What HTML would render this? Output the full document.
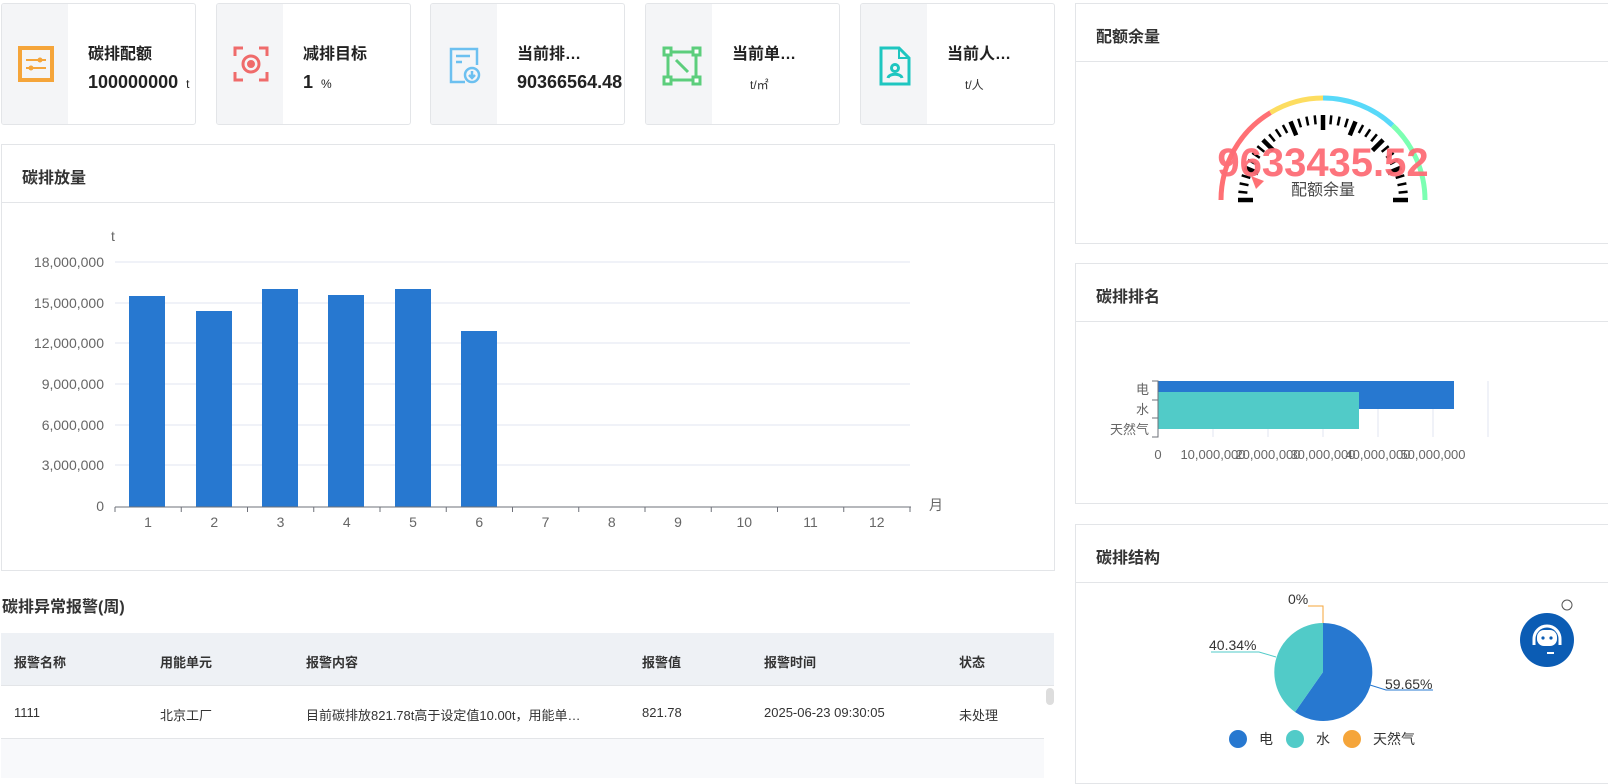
<!DOCTYPE html>
<html><head><meta charset="utf-8"><style>
*{box-sizing:border-box;margin:0;padding:0}
body{width:1608px;height:776px;overflow:hidden;background:#fff;font-family:"Liberation Sans","Noto Sans CJK SC",sans-serif;color:#333;position:relative}
.card{position:absolute;top:3px;height:122px;width:195px;border:1px solid #e3e5e8;border-radius:3px;background:#fff;overflow:hidden}
.card .ic{position:absolute;left:0;top:0;width:66px;height:100%;background:#f4f5f7}
.card .ic svg{position:absolute;left:16px;top:42px}
.card .t{position:absolute;left:86px;top:36px;font-size:16px;font-weight:bold;color:#222}
.card .v{position:absolute;left:86px;top:68px;font-size:18px;font-weight:bold;color:#222;white-space:nowrap}
.card .v small{font-size:12px;font-weight:normal;margin-left:8px}
.card .u{position:absolute;left:104px;top:72px;font-size:12px;color:#333}
.panel{position:absolute;border:1px solid #e3e5e8;background:#fff}
.panel .h{height:58px;border-bottom:1px solid #e3e5e8;font-size:16px;font-weight:bold;padding:19px 0 0 20px;color:#333}
.abs{position:absolute}
</style></head><body>

<div class="card" style="left:1px"><div class="ic"><svg width="36" height="36" viewBox="0 0 36 36"><rect x="2" y="2" width="32" height="32" fill="none" stroke="#f5a53a" stroke-width="4"/><path d="M8 14h20M8 22h20" stroke="#f5a53a" stroke-width="2"/><circle cx="22" cy="14" r="2.5" fill="#f5a53a"/><circle cx="13" cy="22" r="2.5" fill="#f5a53a"/></svg></div><div class="t">碳排配额</div><div class="v">100000000<small>t</small></div></div>
<div class="card" style="left:216px"><div class="ic"><svg width="36" height="36" viewBox="0 0 36 36" fill="none" stroke="#ef6b6b" stroke-width="3"><path d="M2 10V2h8M26 2h8v8M34 26v8h-8M10 34H2v-8"/><circle cx="18" cy="18" r="8"/><circle cx="18" cy="18" r="2.5" fill="#ef6b6b"/></svg></div><div class="t">减排目标</div><div class="v">1<small>%</small></div></div>
<div class="card" style="left:430px"><div class="ic"><svg width="36" height="40" viewBox="0 0 36 40" fill="none" stroke="#6cc0f0" stroke-width="2.5"><path d="M18 36H4V3h26v16"/><path d="M9 10h14M9 16h6"/><circle cx="25" cy="29" r="7"/><path d="M25 25v7M22 29l3 3 3-3"/></svg></div><div class="t">当前排…</div><div class="v">90366564.48</div></div>
<div class="card" style="left:645px"><div class="ic"><svg width="40" height="40" viewBox="0 0 40 40" fill="none" stroke="#5cce7c" stroke-width="3"><rect x="6" y="6" width="28" height="28"/><rect x="2" y="2" width="7" height="7" fill="#fff"/><rect x="31" y="2" width="7" height="7" fill="#fff"/><rect x="2" y="31" width="7" height="7" fill="#fff"/><rect x="31" y="31" width="7" height="7" fill="#fff"/><path d="M14 14l12 12"/></svg></div><div class="t">当前单…</div><div class="u">t/㎡</div></div>
<div class="card" style="left:860px"><div class="ic"><svg width="36" height="40" viewBox="0 0 36 40" fill="none" stroke="#1ec6c0" stroke-width="3"><path d="M4 2h18l10 10v26H4z"/><path d="M22 2v10h10" stroke-width="2"/><circle cx="18" cy="22" r="3.5"/><path d="M11 32c1-5 13-5 14 0"/></svg></div><div class="t">当前人…</div><div class="u">t/人</div></div>

<div class="panel" style="left:1px;top:144px;width:1054px;height:427px"><div class="h">碳排放量</div></div>
<svg class="abs" style="left:0;top:0" width="1060" height="560" font-family="Liberation Sans,sans-serif" font-size="14" fill="#666">
<text x="111" y="241">t</text>
<g stroke="#e0e6f1"><line x1="115" y1="262" x2="910" y2="262"/><line x1="115" y1="303" x2="910" y2="303"/><line x1="115" y1="343" x2="910" y2="343"/><line x1="115" y1="384" x2="910" y2="384"/><line x1="115" y1="425" x2="910" y2="425"/><line x1="115" y1="465" x2="910" y2="465"/></g>
<g text-anchor="end"><text x="104" y="267">18,000,000</text><text x="104" y="308">15,000,000</text><text x="104" y="348">12,000,000</text><text x="104" y="389">9,000,000</text><text x="104" y="430">6,000,000</text><text x="104" y="470">3,000,000</text><text x="104" y="511">0</text></g>
<g fill="#2778d0"><rect x="129" y="296" width="36" height="211"/><rect x="196" y="311" width="36" height="196"/><rect x="262" y="289" width="36" height="218"/><rect x="328" y="295" width="36" height="212"/><rect x="395" y="289" width="36" height="218"/><rect x="461" y="331" width="36" height="176"/></g>
<line x1="115" y1="507" x2="911" y2="507" stroke="#6e7079"/>
<g stroke="#6e7079" id="xt"></g>
<g text-anchor="middle" id="xl"></g>
<text x="929" y="510">月</text>
</svg>

<div class="abs" style="left:2px;top:593px;font-size:16px;font-weight:bold;color:#333">碳排异常报警(周)</div>
<div class="abs" style="left:1px;top:633px;width:1053px;height:53px;background:#eef1f5;border-bottom:1px solid #e3e5e8"></div>
<div class="abs" style="left:1px;top:738px;width:1043px;height:40px;background:#f8f9fb;border-top:1px solid #e3e5e8"></div>
<div class="abs" style="left:1046px;top:688px;width:8px;height:17px;background:#ddd;border-radius:4px"></div>
<div class="abs" style="top:652px;left:0;font-size:13px;font-weight:bold;color:#333;width:1054px">
<span class="abs" style="left:14px">报警名称</span><span class="abs" style="left:160px">用能单元</span><span class="abs" style="left:306px">报警内容</span><span class="abs" style="left:642px">报警值</span><span class="abs" style="left:764px">报警时间</span><span class="abs" style="left:959px">状态</span></div>
<div class="abs" style="top:705px;left:0;font-size:13px;color:#333;width:1054px">
<span class="abs" style="left:14px">1111</span><span class="abs" style="left:160px">北京工厂</span><span class="abs" style="left:306px;white-space:nowrap">目前碳排放821.78t高于设定值10.00t，用能单…</span><span class="abs" style="left:642px">821.78</span><span class="abs" style="left:764px;white-space:nowrap">2025-06-23 09:30:05</span><span class="abs" style="left:959px">未处理</span></div>

<div class="panel" style="left:1075px;top:3px;width:540px;height:241px"><div class="h">配额余量</div></div>
<div class="panel" style="left:1075px;top:263px;width:540px;height:241px"><div class="h">碳排排名</div></div>
<div class="panel" style="left:1075px;top:524px;width:540px;height:260px"><div class="h">碳排结构</div></div>

<svg class="abs" style="left:0;top:0" width="1608" height="776" font-family="Liberation Sans,'Noto Sans CJK SC',sans-serif">
<g fill="none" stroke-width="5" id="arcs"></g>
<g id="ticks" stroke="#000"></g>
<path d="M1251 176 L1264 181 L1256 189 Z" fill="#ff7074"/>
<text x="1323" y="176" text-anchor="middle" font-size="40" font-weight="bold" fill="#fd6d77" opacity="0.95">9633435.52</text>
<text x="1323" y="195" text-anchor="middle" font-size="16" fill="#464646">配额余量</text>

<g stroke="#e0e6f1"><line x1="1213" y1="381" x2="1213" y2="437"/><line x1="1268" y1="381" x2="1268" y2="437"/><line x1="1323" y1="381" x2="1323" y2="437"/><line x1="1378" y1="381" x2="1378" y2="437"/><line x1="1433" y1="381" x2="1433" y2="437"/><line x1="1488" y1="381" x2="1488" y2="437"/></g>
<rect x="1158" y="381" width="296" height="28" fill="#2778d0"/>
<rect x="1158" y="392" width="201" height="37" fill="#51cbc8"/>
<path d="M1152 381h6v56h-6M1152 400h6M1152 418h6" stroke="#6e7079" fill="none"/>
<g font-size="13" fill="#666" text-anchor="end"><text x="1149" y="394">电</text><text x="1149" y="414">水</text><text x="1149" y="434">天然气</text></g>
<g font-size="13" fill="#666" text-anchor="middle"><text x="1158" y="459">0</text><text x="1213" y="459">10,000,000</text><text x="1268" y="459">20,000,000</text><text x="1323" y="459">30,000,000</text><text x="1378" y="459">40,000,000</text><text x="1433" y="459">50,000,000</text></g>

<path d="M1323 672 L1323 623 A49 49 0 1 1 1295 712 Z" fill="#2778d0"/>
<path d="M1323 672 L1295 712 A49 49 0 0 1 1323 623 Z" fill="#51cbc8"/>
<path d="M1323 623 V606 H1308" stroke="#f5a53a" fill="none"/>
<path d="M1276 657 L1259 652 H1211" stroke="#51cbc8" fill="none"/>
<path d="M1370 685 L1386 690 H1433" stroke="#2778d0" fill="none"/>
<g font-size="14" fill="#333"><text x="1288" y="604">0%</text><text x="1209" y="650">40.34%</text><text x="1385" y="689">59.65%</text></g>
<circle cx="1238" cy="739" r="9" fill="#2778d0"/><circle cx="1295" cy="739" r="9" fill="#51cbc8"/><circle cx="1352" cy="739" r="9" fill="#f5a53a"/>
<g font-size="14" fill="#333"><text x="1259" y="744">电</text><text x="1316" y="744">水</text><text x="1373" y="744">天然气</text></g>

<circle cx="1547" cy="640" r="27" fill="#0b5cb4"/>
<path d="M1534 645v-6a13 13 0 0 1 26 0v6" stroke="#fff" stroke-width="3" fill="none"/>
<rect x="1537" y="630" width="20" height="16" rx="7" fill="#fff"/>
<circle cx="1543" cy="638" r="1.6" fill="#0b5cb4"/><circle cx="1551" cy="638" r="1.6" fill="#0b5cb4"/>
<path d="M1547 653h7" stroke="#fff" stroke-width="2"/>
<circle cx="1567" cy="605" r="5" fill="none" stroke="#555"/>
</svg>
<script>
var xt=document.getElementById('xt'),xl=document.getElementById('xl'),s='';
var l='';for(var i=0;i<=12;i++){var x=115+i*66.25;s+='<line x1="'+x+'" y1="507" x2="'+x+'" y2="512"/>';}
xt.innerHTML=s;
for(var i=0;i<12;i++){l+='<text x="'+(148+i*66.25)+'" y="527">'+(i+1)+'</text>';}xl.innerHTML=l;
var t='',cx=1323,cy=200;
function P(r,deg){var a=deg*Math.PI/180;return (cx+r*Math.cos(a)).toFixed(1)+' '+(cy-r*Math.sin(a)).toFixed(1);}
var R=102,segs=[[180,121,'#ff7074'],[121,90,'#fddd60'],[90,47,'#58d9f9'],[47,0,'#7cffb2']],ar='';
segs.forEach(function(g){ar+='<path d="M'+P(R,g[0])+' A'+R+' '+R+' 0 0 1 '+P(R,g[1])+'" stroke="'+g[2]+'"/>';});
document.getElementById('arcs').innerHTML=ar;
for(var k=0;k<=32;k++){var deg=180-k*180/32;var maj=k%4==0;
var r1=maj?70:76,r2=85,w=maj?4.5:2.5;
t+='<line x1="'+P(r1,deg).split(' ')[0]+'" y1="'+P(r1,deg).split(' ')[1]+'" x2="'+P(r2,deg).split(' ')[0]+'" y2="'+P(r2,deg).split(' ')[1]+'" stroke-width="'+w+'"/>';}
document.getElementById('ticks').innerHTML=t;
</script>
</body></html>
